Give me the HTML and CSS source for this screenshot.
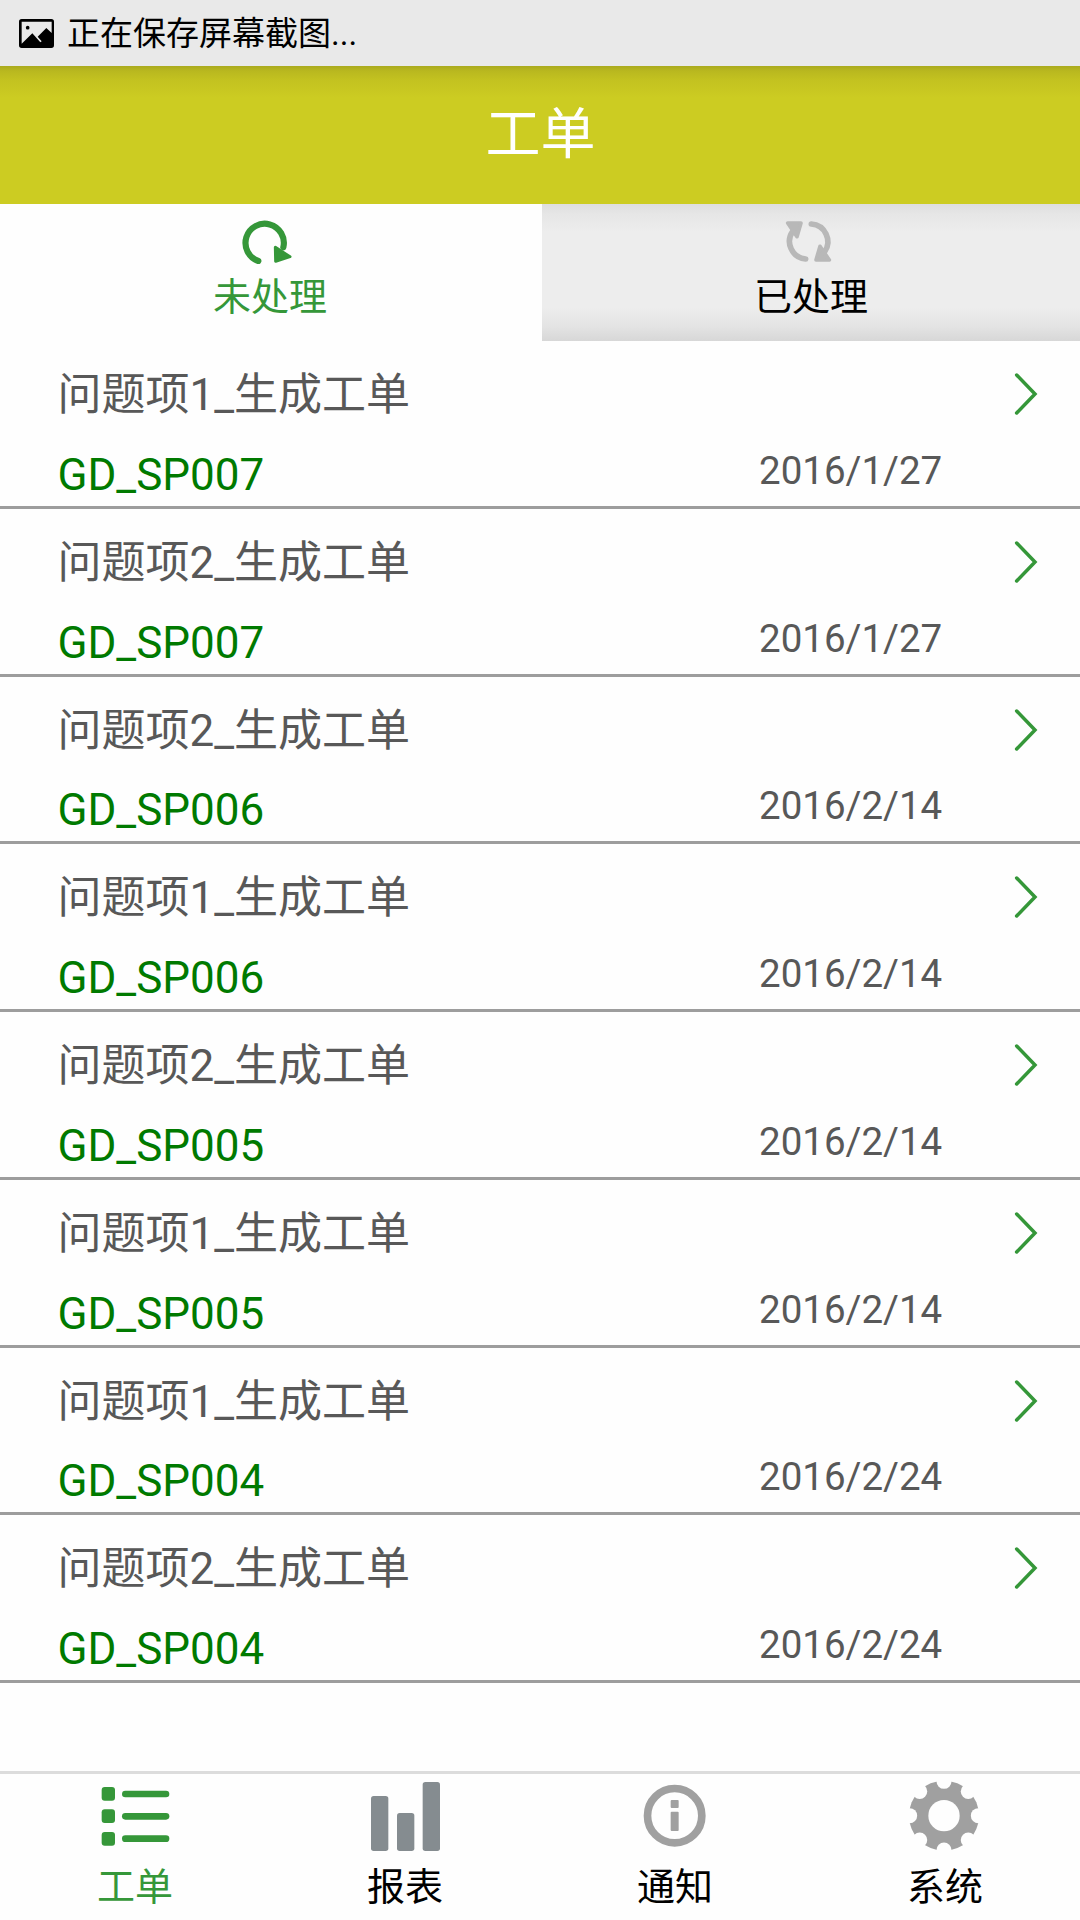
FILE: index.html
```html
<!DOCTYPE html>
<html lang="zh-CN">
<head>
<meta charset="utf-8">
<title>工单</title>
<link rel="stylesheet" href="styles.css">
</head>
<body>
<svg class="defs" width="0" height="0" aria-hidden="true">
  <symbol id="chevron" viewBox="0 0 72 126"><path d="M8 6 63 63 8 120" fill="none" stroke="#359739" stroke-width="10.5" stroke-linecap="round" stroke-linejoin="miter"/></symbol>
</svg>
<div class="app">
  <div class="status">
    <svg class="status-icon" viewBox="0 0 105 87"><path fill-rule="evenodd" d="M8 0H97Q105 0 105 8V79Q105 87 97 87H8Q0 87 0 79V8Q0 0 8 0ZM8 8V74L40 43 64 70 68 67 56 53 82 27 98 42V8Z"/><circle cx="26" cy="26" r="5.5"/></svg>
    <span>正在保存屏幕截图...</span>
  </div>
  <header class="header">工单</header>
  <div class="tabs">
    <div class="tab tab-active">
      <svg class="tab-icon" viewBox="153 60 180 132"><path d="M205 183A57.500 57.500 0 1 1 280 142" fill="none" stroke="#359739" stroke-width="18.500" stroke-linecap="round"/><path d="M256 142 300 170 257 184Z" fill="#359739" stroke="#359739" stroke-width="9" stroke-linejoin="round"/></svg>
      <span>未处理</span>
    </div>
    <div class="tab tab-idle">
      <svg class="tab-icon" viewBox="783 90 180 132"><g fill="none" stroke="#b8b8b8" stroke-width="17" stroke-linecap="round"><path d="M874 102A53 53 0 0 1 914 185"/><path d="M857 207A53 53 0 0 1 818 124"/></g><g fill="#b8b8b8" stroke="#b8b8b8" stroke-width="11" stroke-linejoin="round"><path d="M803 99H843L831 140Z"/><path d="M928 210H888L900 169Z"/></g></svg>
      <span>已处理</span>
    </div>
  </div>
  <main class="list">
    <div class="row"><div class="name">问题项1_生成工单</div><svg class="chevron"><use href="#chevron"/></svg><div class="code">GD_SP007</div><div class="date">2016/1/27</div></div>
    <div class="row"><div class="name">问题项2_生成工单</div><svg class="chevron"><use href="#chevron"/></svg><div class="code">GD_SP007</div><div class="date">2016/1/27</div></div>
    <div class="row"><div class="name">问题项2_生成工单</div><svg class="chevron"><use href="#chevron"/></svg><div class="code">GD_SP006</div><div class="date">2016/2/14</div></div>
    <div class="row"><div class="name">问题项1_生成工单</div><svg class="chevron"><use href="#chevron"/></svg><div class="code">GD_SP006</div><div class="date">2016/2/14</div></div>
    <div class="row"><div class="name">问题项2_生成工单</div><svg class="chevron"><use href="#chevron"/></svg><div class="code">GD_SP005</div><div class="date">2016/2/14</div></div>
    <div class="row"><div class="name">问题项1_生成工单</div><svg class="chevron"><use href="#chevron"/></svg><div class="code">GD_SP005</div><div class="date">2016/2/14</div></div>
    <div class="row"><div class="name">问题项1_生成工单</div><svg class="chevron"><use href="#chevron"/></svg><div class="code">GD_SP004</div><div class="date">2016/2/24</div></div>
    <div class="row"><div class="name">问题项2_生成工单</div><svg class="chevron"><use href="#chevron"/></svg><div class="code">GD_SP004</div><div class="date">2016/2/24</div></div>
  </main>
  <nav class="nav">
    <div class="nav-item nav-active">
      <svg class="nav-icon" viewBox="297 360 216 216" fill="#359739"><rect x="305" y="381" width="40" height="41" rx="9"/><rect x="305" y="448" width="40" height="41" rx="9"/><rect x="305" y="516" width="40" height="41" rx="9"/><rect x="366" y="392" width="142" height="20" rx="10"/><rect x="366" y="459" width="142" height="20" rx="10"/><rect x="366" y="526" width="142" height="20" rx="10"/></svg>
      <span>工单</span>
    </div>
    <div class="nav-item">
      <svg class="nav-icon" viewBox="147 60 216 216" fill="#858c90"><rect x="153" y="108" width="52" height="165" rx="8"/><rect x="231" y="159" width="52" height="114" rx="8"/><rect x="308" y="66" width="52" height="207" rx="8"/></svg>
      <span>报表</span>
    </div>
    <div class="nav-item">
      <svg class="nav-icon" viewBox="117 60 216 216" fill="#a0a0a0"><circle cx="224" cy="167" r="81.500" fill="none" stroke="#a0a0a0" stroke-width="23"/><rect x="212" y="120" width="24" height="24" rx="3"/><rect x="212" y="155" width="24" height="58" rx="3"/></svg>
      <span>通知</span>
    </div>
    <div class="nav-item">
      <svg class="nav-icon" viewBox="-105 -107 216 216">
        <mask id="gear" maskUnits="userSpaceOnUse" x="-110" y="-110" width="220" height="220">
          <circle r="105" fill="#fff"/>
          <g fill="#000"><circle r="47"/><circle id="notch" cy="-103" r="22.500"/><use href="#notch" transform="rotate(45)"/><use href="#notch" transform="rotate(90)"/><use href="#notch" transform="rotate(135)"/><use href="#notch" transform="rotate(180)"/><use href="#notch" transform="rotate(225)"/><use href="#notch" transform="rotate(270)"/><use href="#notch" transform="rotate(315)"/></g>
        </mask>
        <rect x="-110" y="-110" width="220" height="220" fill="#a0a0a0" mask="url(#gear)"/>
      </svg>
      <span>系统</span>
    </div>
  </nav>
</div>
</body>
</html>
```

FILE: styles.css
```css
* { box-sizing: border-box; }
body {
  margin: 0;
  background: #fefefe;
  color: #000;
  font-family: Roboto, "Noto Sans CJK SC", sans-serif;
}
svg { display: block; }
.defs { position: absolute; }
.app {
  display: flex;
  flex-direction: column;
  width: 1080px;
  height: 1920px;
  overflow: hidden;
}
.status {
  display: flex;
  align-items: center;
  gap: 13px;
  height: 66px;
  flex: none;
  padding-left: 19px;
  background: #e9e9e9;
  font-size: 33px;
}
.status span { padding-bottom: 4px; }
.status-icon { width: 35px; height: 29px; }
.header {
  display: flex;
  align-items: center;
  justify-content: center;
  flex: none;
  height: 137.5px;
  padding: 0 0 12px 1px;
  background: linear-gradient(#aaaa1e 0, #b9b81f 5px, #c3c220 14px, #cccc22 32px);
  color: #fff;
  font-size: 55px;
}
.tabs {
  display: flex;
  flex: none;
  height: 137.5px;
  font-size: 38px;
  line-height: 46px;
}
.tab {
  display: flex;
  flex-direction: column;
  align-items: center;
  gap: 10.5px;
  padding-top: 16px;
}
.tab-active { width: 542px; color: #359739; }
.tab-active span { padding-right: 2px; }
.tab-idle {
  flex: 1;
  background: linear-gradient(#dedede 0, #e6e6e6 10px, #ededed 28px, #ededed 104px, #e4e4e4 122px, #d7d7d7 100%);
}
.tab-icon { width: 60px; height: 44px; }
.list { flex: 1; padding-top: 0.4px; }
.row {
  display: grid;
  grid-template-columns: 701.5px 1fr 24px;
  grid-template-rows: 52px 52px;
  row-gap: 27.7px;
  height: 167.7px;
  padding: 28px 42px 0 57.5px;
  border-bottom: 3px solid #9d9d9d;
  font-size: 44px;
  line-height: 52px;
}
.name { grid-column: 1 / 3; color: #585858; }
.chevron { width: 24px; height: 42px; margin-top: 4px; }
.code { color: #007a00; }
.date {
  grid-column: 2 / 4;
  margin-top: -1px;
  color: #585858;
  font-size: 38.5px;
  line-height: 46px;
}
.nav {
  display: grid;
  grid-template-columns: repeat(4, 1fr);
  flex: none;
  height: 149px;
  border-top: 3px solid #dcdcdc;
  font-size: 38px;
  line-height: 46px;
}
.nav-item {
  display: flex;
  flex-direction: column;
  align-items: center;
  gap: 11.5px;
  padding-top: 6px;
}
.nav-active { color: #359739; }
.nav-icon { width: 72px; height: 72px; }
```
